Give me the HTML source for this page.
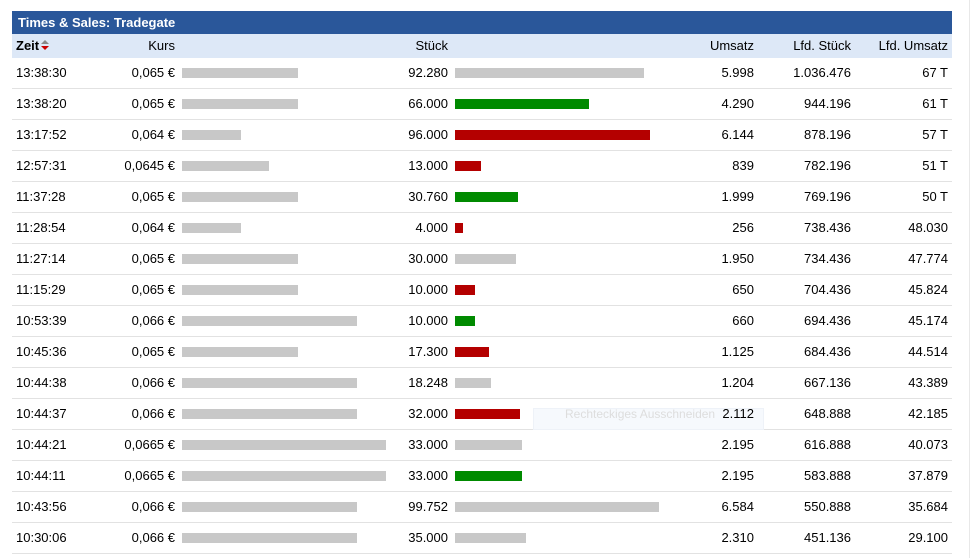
<!DOCTYPE html><html><head><style>
body{margin:0;background:#fff;font-family:"Liberation Sans",Arial,sans-serif;font-size:13px;color:#000;width:972px;height:558px;overflow:hidden;position:relative}
.title{position:absolute;left:12px;top:11px;width:940px;height:23px;background:#2a579a;color:#fff;font-weight:bold;font-size:13px;line-height:24px;}
.title span{padding-left:6px}
.hd{position:absolute;left:12px;top:34px;width:940px;height:24px;background:#dde8f7;}
.r{position:absolute;left:12px;width:940px;height:30px;border-bottom:1px solid #e2e2e2;}
.r span,.hd span{position:absolute;top:0;line-height:30px;white-space:nowrap}
.hd span{line-height:23px}
.t{left:4px}.k{left:88px;width:75px;text-align:right}.s{left:356px;width:80px;text-align:right}
.u{left:668px;width:74px;text-align:right}.ls{left:759px;width:80px;text-align:right}.lu{left:856px;width:80px;text-align:right}
.b{position:absolute;top:10px;height:10px}
.g{background:#c8c8c8}.gr{background:#008a00}.rd{background:#b40000}
.vl{position:absolute;left:969px;top:0;width:1px;height:558px;background:#e8e8e8}
</style></head><body>
<div class="title"><span>Times &amp; Sales: Tradegate</span></div>
<div class="hd"><span class="t" style="font-weight:bold">Zeit<svg width="10" height="12" style="vertical-align:-1px;margin-left:1px"><path d="M1 5 L5 1 L9 5Z" fill="#888"/><path d="M1 7 L9 7 L5 11Z" fill="#c00"/></svg></span><span class="k">Kurs</span><span class="s">Stück</span><span class="u">Umsatz</span><span class="ls">Lfd. Stück</span><span class="lu">Lfd. Umsatz</span></div>

<div class="r" style="top:58px"><span class="t">13:38:30</span><span class="k">0,065 €</span><div class="b g" style="left:170px;width:116px"></div><span class="s">92.280</span><div class="b g" style="left:443px;width:189px"></div><span class="u">5.998</span><span class="ls">1.036.476</span><span class="lu">67 T</span></div>
<div class="r" style="top:89px"><span class="t">13:38:20</span><span class="k">0,065 €</span><div class="b g" style="left:170px;width:116px"></div><span class="s">66.000</span><div class="b gr" style="left:443px;width:134px"></div><span class="u">4.290</span><span class="ls">944.196</span><span class="lu">61 T</span></div>
<div class="r" style="top:120px"><span class="t">13:17:52</span><span class="k">0,064 €</span><div class="b g" style="left:170px;width:59px"></div><span class="s">96.000</span><div class="b rd" style="left:443px;width:195px"></div><span class="u">6.144</span><span class="ls">878.196</span><span class="lu">57 T</span></div>
<div class="r" style="top:151px"><span class="t">12:57:31</span><span class="k">0,0645 €</span><div class="b g" style="left:170px;width:87px"></div><span class="s">13.000</span><div class="b rd" style="left:443px;width:26px"></div><span class="u">839</span><span class="ls">782.196</span><span class="lu">51 T</span></div>
<div class="r" style="top:182px"><span class="t">11:37:28</span><span class="k">0,065 €</span><div class="b g" style="left:170px;width:116px"></div><span class="s">30.760</span><div class="b gr" style="left:443px;width:63px"></div><span class="u">1.999</span><span class="ls">769.196</span><span class="lu">50 T</span></div>
<div class="r" style="top:213px"><span class="t">11:28:54</span><span class="k">0,064 €</span><div class="b g" style="left:170px;width:59px"></div><span class="s">4.000</span><div class="b rd" style="left:443px;width:8px"></div><span class="u">256</span><span class="ls">738.436</span><span class="lu">48.030</span></div>
<div class="r" style="top:244px"><span class="t">11:27:14</span><span class="k">0,065 €</span><div class="b g" style="left:170px;width:116px"></div><span class="s">30.000</span><div class="b g" style="left:443px;width:61px"></div><span class="u">1.950</span><span class="ls">734.436</span><span class="lu">47.774</span></div>
<div class="r" style="top:275px"><span class="t">11:15:29</span><span class="k">0,065 €</span><div class="b g" style="left:170px;width:116px"></div><span class="s">10.000</span><div class="b rd" style="left:443px;width:20px"></div><span class="u">650</span><span class="ls">704.436</span><span class="lu">45.824</span></div>
<div class="r" style="top:306px"><span class="t">10:53:39</span><span class="k">0,066 €</span><div class="b g" style="left:170px;width:175px"></div><span class="s">10.000</span><div class="b gr" style="left:443px;width:20px"></div><span class="u">660</span><span class="ls">694.436</span><span class="lu">45.174</span></div>
<div class="r" style="top:337px"><span class="t">10:45:36</span><span class="k">0,065 €</span><div class="b g" style="left:170px;width:116px"></div><span class="s">17.300</span><div class="b rd" style="left:443px;width:34px"></div><span class="u">1.125</span><span class="ls">684.436</span><span class="lu">44.514</span></div>
<div class="r" style="top:368px"><span class="t">10:44:38</span><span class="k">0,066 €</span><div class="b g" style="left:170px;width:175px"></div><span class="s">18.248</span><div class="b g" style="left:443px;width:36px"></div><span class="u">1.204</span><span class="ls">667.136</span><span class="lu">43.389</span></div>
<div class="r" style="top:399px"><span class="t">10:44:37</span><span class="k">0,066 €</span><div class="b g" style="left:170px;width:175px"></div><span class="s">32.000</span><div class="b rd" style="left:443px;width:65px"></div><div style="position:absolute;left:521px;top:9px;width:229px;height:20px;background:#f6f9fd;border:1px solid #eef2f8"></div><span style="left:553px;color:#ddd;font-size:12px">Rechteckiges Ausschneiden</span><span class="u">2.112</span><span class="ls">648.888</span><span class="lu">42.185</span></div>
<div class="r" style="top:430px"><span class="t">10:44:21</span><span class="k">0,0665 €</span><div class="b g" style="left:170px;width:204px"></div><span class="s">33.000</span><div class="b g" style="left:443px;width:67px"></div><span class="u">2.195</span><span class="ls">616.888</span><span class="lu">40.073</span></div>
<div class="r" style="top:461px"><span class="t">10:44:11</span><span class="k">0,0665 €</span><div class="b g" style="left:170px;width:204px"></div><span class="s">33.000</span><div class="b gr" style="left:443px;width:67px"></div><span class="u">2.195</span><span class="ls">583.888</span><span class="lu">37.879</span></div>
<div class="r" style="top:492px"><span class="t">10:43:56</span><span class="k">0,066 €</span><div class="b g" style="left:170px;width:175px"></div><span class="s">99.752</span><div class="b g" style="left:443px;width:204px"></div><span class="u">6.584</span><span class="ls">550.888</span><span class="lu">35.684</span></div>
<div class="r" style="top:523px"><span class="t">10:30:06</span><span class="k">0,066 €</span><div class="b g" style="left:170px;width:175px"></div><span class="s">35.000</span><div class="b g" style="left:443px;width:71px"></div><span class="u">2.310</span><span class="ls">451.136</span><span class="lu">29.100</span></div>
<div class="vl"></div>
</body></html>
